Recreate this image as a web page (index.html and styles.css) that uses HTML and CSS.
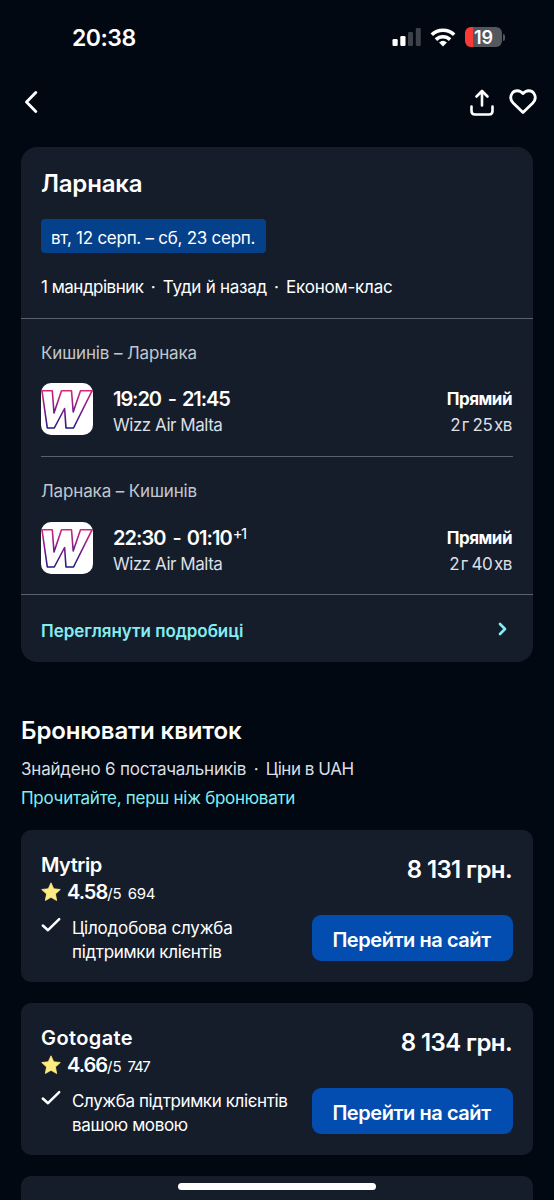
FILE: index.html
```html
<!DOCTYPE html>
<html lang="uk">
<head>
<meta charset="utf-8">
<title>Ларнака</title>
<link rel="stylesheet" href="styles.css">
</head>
<body>
<svg class="defs" width="0" height="0" aria-hidden="true">
  <defs>
    <linearGradient id="wizz" x1="0" y1="0" x2="0" y2="1">
      <stop offset="0" stop-color="#d6247f"/><stop offset=".5" stop-color="#7a1c8c"/><stop offset="1" stop-color="#1f1a86"/>
    </linearGradient>
    <symbol id="airline" viewBox="0 0 52 52">
      <rect width="52" height="52" rx="10" fill="#fff"/>
      <path d="M1 7.800H11.300L13 30L20.500 7.800H30.500L32.200 29L39.500 7.800H51L32.500 45H25L23.600 25.500L13.300 45H6.300Z" fill="#fff" stroke="url(#wizz)" stroke-width="1.600" stroke-linejoin="round"/>
    </symbol>
    <symbol id="star" viewBox="0 0 20 20"><path d="M10 .8L12.700 6.800L19.300 7.500L14.400 12L15.700 18.500L10 15.300L4.300 18.500L5.600 12L.7 7.500L7.300 6.800Z" fill="#ffeb80" stroke="#ffeb80" stroke-width=".8" stroke-linejoin="round"/></symbol>
    <symbol id="check" viewBox="0 0 20 16"><path d="M1.800 8.500L7 13.200L18.200 2.200" fill="none" stroke="#fff" stroke-width="2.500" stroke-linecap="round" stroke-linejoin="round"/></symbol>
  </defs>
</svg>
<div class="screen">
  <header class="status">
    <span class="clock">20:38</span>
    <div class="indicators">
      <svg width="29" height="18" viewBox="0 0 29 18"><rect x="0.500" y="11" width="5.200" height="7" rx="1.300" fill="#fff"/><rect x="8.300" y="8" width="5.200" height="10" rx="1.300" fill="#fff"/><rect x="16" y="4" width="5" height="14" rx="1.300" fill="#3d424a"/><rect x="23.800" y="0" width="5" height="18" rx="1.300" fill="#3d424a"/></svg>
      <svg class="wifi" width="26" height="19" viewBox="0 0 26 19"><g fill="none" stroke="#fff" stroke-width="3.600"><path d="M1.800 6.800A16 16 0 0 1 24.200 6.800"/><path d="M5.900 11.600A10.200 10.200 0 0 1 20.100 11.600"/></g><path d="M9.100 14.400Q13 11.200 16.900 14.400L13 18.500Z" fill="#fff"/></svg>
      <div class="battery"><span class="battery-body">19</span><span class="battery-cap"></span></div>
    </div>
  </header>
  <nav class="toolbar">
    <svg class="back" width="14" height="22" viewBox="0 0 14 22"><path d="M11.800 1.500L2.500 11L11.800 20.500" fill="none" stroke="#fff" stroke-width="2.800" stroke-linecap="round" stroke-linejoin="round"/></svg>
    <svg width="24" height="27" viewBox="0 0 24 27"><path d="M12 16.500V2M6.500 7.500L12 2L17.500 7.500M1.500 17.500V22Q1.500 25.500 5 25.500H19Q22.500 25.500 22.500 22V17.500" fill="none" stroke="#fff" stroke-width="2.600" stroke-linecap="round" stroke-linejoin="round"/></svg>
    <svg width="28" height="26" viewBox="0 0 28 26"><path d="M14 4.600C10.800 .8 5.500 .9 3.200 4.200C1 7.500 1.600 11.300 4.200 14L14 23.600L23.800 14C26.400 11.300 27 7.500 24.800 4.200C22.500 .9 17.200 .8 14 4.600Z" fill="none" stroke="#fff" stroke-width="2.800" stroke-linejoin="round"/></svg>
  </nav>
  <main>
    <section class="trip">
      <div class="trip-head">
        <h1>Ларнака</h1>
        <div class="dates"><span>вт, 12 серп. – сб, 23 серп.</span></div>
        <p class="facts"><span class="fact-people">1 мандрівник</span><i>·</i><span class="fact-type">Туди й назад</span><i>·</i><span class="fact-class">Економ-клас</span></p>
      </div>
      <div class="leg">
        <p class="route">Кишинів – Ларнака</p>
        <div class="flight">
          <svg width="52" height="52"><use href="#airline"/></svg>
          <div class="when"><strong>19:20 <b>-</b> 21:45</strong><span>Wizz Air Malta</span></div>
          <div class="duration"><strong>Прямий</strong><span>2 г<i> </i>25 хв</span></div>
        </div>
      </div>
      <div class="leg leg-return">
        <p class="route">Ларнака – Кишинів</p>
        <div class="flight">
          <svg width="52" height="52"><use href="#airline"/></svg>
          <div class="when"><strong>22:30 <b>-</b> 01:10<sup>+1</sup></strong><span>Wizz Air Malta</span></div>
          <div class="duration"><strong>Прямий</strong><span>2 г<i> </i>40 хв</span></div>
        </div>
      </div>
      <a class="details"><span>Переглянути подробиці</span><svg width="10" height="14" viewBox="0 0 10 14"><path d="M2 2L7 7L2 12" fill="none" stroke="#84edf2" stroke-width="2.700" stroke-linecap="round" stroke-linejoin="round"/></svg></a>
    </section>
    <section class="booking">
      <h2>Бронювати квиток</h2>
      <p class="found"><span>Знайдено 6 постачальників</span><i>·</i><span class="currency">Ціни в UAH</span></p>
      <a class="read">Прочитайте, перш ніж бронювати</a>
    </section>
    <div class="offers">
      <article class="offer">
        <div class="provider">
          <h3 class="mytrip">Mytrip</h3>
          <div class="rating"><svg width="20" height="20"><use href="#star"/></svg><strong>4.58</strong><span>/5</span><span class="votes">694</span></div>
          <div class="perk"><svg width="20" height="16"><use href="#check"/></svg><p><span class="perk-a">Цілодобова служба</span><br><span class="perk-b">підтримки клієнтів</span></p></div>
        </div>
        <div class="deal"><strong>8 131 грн.</strong><button><span>Перейти на сайт</span></button></div>
      </article>
      <article class="offer">
        <div class="provider">
          <h3 class="gotogate">Gotogate</h3>
          <div class="rating"><svg width="20" height="20"><use href="#star"/></svg><strong>4.66</strong><span>/5</span><span class="votes votes-tight">747</span></div>
          <div class="perk"><svg width="20" height="16"><use href="#check"/></svg><p><span class="perk-c">Служба підтримки клієнтів</span><br><span class="perk-c">вашою мовою</span></p></div>
        </div>
        <div class="deal"><strong>8 134 грн.</strong><button><span>Перейти на сайт</span></button></div>
      </article>
      <article class="offer"></article>
    </div>
  </main>
  <div class="home-indicator"></div>
</div>
</body>
</html>
```
FILE: styles.css
```css
* { box-sizing: border-box; }
body { margin: 0; background: #010812; }
h1, h2, h3, p { margin: 0; font-weight: 600; }
p, i { font-weight: 400; font-style: normal; }
svg { display: block; flex: none; }
.defs { position: absolute; }
.screen {
  position: relative; width: 554px; height: 1200px; overflow: hidden;
  background: #010812; color: #fff;
  font: 400 17px/24px Inter, "Noto Sans", sans-serif; white-space: nowrap;
}

.status { display: flex; justify-content: space-between; height: 76px; padding: 24px 49px 0 72px; }
.clock { font-size: 23px; font-weight: 600; line-height: 28px; letter-spacing: -.5px; }
.indicators { display: flex; align-items: flex-start; padding-top: 4px; }
.wifi { margin: 0 9px 0 9px; }
.battery { display: flex; align-items: center; gap: 1px; margin-top: -1px; }
.battery-body {
  width: 37px; height: 20px; border-radius: 6px; text-align: center;
  background: linear-gradient(90deg, #fa3b35 7.500px, #53575e 7.500px);
  font-size: 18px; font-weight: 600; line-height: 21px;
}
.battery-cap { width: 2px; height: 7px; border-radius: 0 2px 2px 0; background: #53575e; }

.toolbar { display: flex; align-items: center; gap: 15px; height: 52px; padding: 0 17px 0 24px; }
.back { margin-right: auto; }

.trip { height: 515px; margin: 19px 21px 0; border-radius: 16px; background: #151d2b; }
.trip-head { height: 172px; padding: 20px 20px 0; border-bottom: 1px solid #59616d; }
h1 { font-size: 24px; line-height: 34px; letter-spacing: -.2px; }
.dates {
  display: inline-flex; align-items: center; width: 225px; height: 34px; margin-top: 18px;
  padding: 3px 0 0 10px; border-radius: 4px; background: #05408a; letter-spacing: -.26px;
}
.facts { display: flex; gap: 7.200px; margin-top: 22px; }
.fact-people { letter-spacing: -.5px; }
.fact-type { letter-spacing: -.27px; }
.fact-class { letter-spacing: -.2px; }

.leg { height: 138px; margin: 0 20px; padding-top: 22px; border-bottom: 1px solid #59616d; }
.leg .flight { margin-top: 18px; }
.leg-return { margin: 0; padding: 22px 20px 0; }
.leg-return .flight { margin-top: 19px; }
.route { color: #c3c7cd; letter-spacing: -.14px; }
.flight { display: flex; }
.when, .duration { display: flex; flex-direction: column; padding-top: 3px; line-height: 26px; color: #dcdfe3; }
.when { margin-left: 20px; letter-spacing: -.47px; }
.when strong { font-size: 20px; font-weight: 600; color: #fff; letter-spacing: -1.080px; }
.leg-return .when strong { letter-spacing: -.97px; }
.when b { font-weight: 500; padding: 0 2px 0 3px; }
sup { margin-left: 1px; font-size: 15px; font-weight: 400; line-height: 0; vertical-align: 6px; letter-spacing: -1.500px; }
.duration { margin-left: auto; padding-right: 1px; align-items: flex-end; letter-spacing: -.4px; word-spacing: -2.800px; }
.duration i { word-spacing: -.8px; }
.duration strong { color: #fff; letter-spacing: -.5px; }
.details { display: flex; justify-content: space-between; align-items: center; height: 67px; padding: 4px 25px 0 20px; color: #84edf2; font-weight: 600; letter-spacing: -.05px; }
.details svg { margin-top: -4px; }

.booking { height: 168px; padding: 52px 21px 0; }
h2 { font-size: 24px; line-height: 34px; letter-spacing: -.12px; }
.found { display: flex; gap: 7.500px; margin-top: 9px; color: #dcdfe3; letter-spacing: -.2px; }
.currency { letter-spacing: -.45px; }
.read { display: block; margin-top: 5px; color: #84edf2; letter-spacing: -.27px; }

.offers { display: flex; flex-direction: column; gap: 21px; padding: 0 21px; }
.offer { display: flex; justify-content: space-between; height: 152px; padding: 23px 20px 0; border-radius: 10px; background: #151d2b; }
.provider { margin-top: -1px; }
h3 { font-size: 20px; line-height: 26px; }
.mytrip { letter-spacing: -.5px; }
.gotogate { letter-spacing: .4px; }
.rating { display: flex; align-items: center; height: 28px; font-size: 15px; }
.rating strong { margin-left: 6px; font-size: 20px; font-weight: 600; letter-spacing: -1px; }
.rating span { padding-top: 3px; }
.rating .votes { margin-left: 6px; letter-spacing: -.3px; }
.rating .votes-tight { letter-spacing: -1.300px; }
.perk { display: flex; gap: 11px; margin-top: 10px; }
.perk svg { margin-top: 1px; }
.perk-a { letter-spacing: -.18px; }
.perk-b { letter-spacing: -.32px; }
.perk-c { letter-spacing: -.38px; }
.deal { display: flex; flex-direction: column; align-items: flex-end; }
.deal strong { padding-right: 1px; font-size: 24px; font-weight: 600; line-height: 34px; letter-spacing: -.6px; }
button {
  width: 201px; height: 46px; margin: 28px 0 0; padding: 4px 2px 0 0; border: 0; border-radius: 9px;
  background: #024daf; color: #fff; font: 600 20px/26px Inter, sans-serif; letter-spacing: -.45px;
}

.home-indicator { position: absolute; left: 178px; top: 1183px; width: 198px; height: 7px; border-radius: 4px; background: #fff; }
```
